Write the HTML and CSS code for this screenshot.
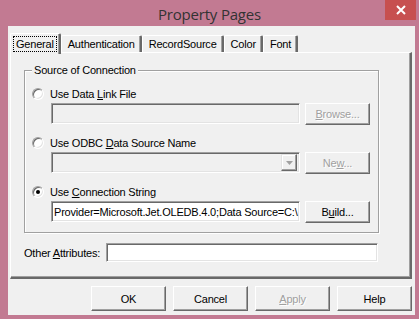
FILE: index.html
```html
<!DOCTYPE html>
<html>
<head>
<meta charset="utf-8">
<link rel="stylesheet" href="styles.css">
</head>
<body>
<div class="window">
  <div class="titlebar">
    <span class="title">Property Pages</span>
    <div class="close"><svg width="10" height="10" viewBox="0 0 10 10"><path d="M1 1L9 9M9 1L1 9" stroke="#fff" stroke-width="2"/></svg></div>
  </div>
  <div class="client">
    <div class="tabs">
      <div class="tab selected"><span class="focus">General</span></div>
      <div class="tab">Authentication</div>
      <div class="tab">RecordSource</div>
      <div class="tab">Color</div>
      <div class="tab">Font</div>
    </div>
    <div class="panel">
      <div class="group">
        <div class="legend">Source of Connection</div>
        <div class="radio-row"><span class="radio"></span><span class="label">Use Data <u>L</u>ink File</span></div>
        <div class="field-row">
          <div class="textbox disabled"></div>
          <div class="btn disabled"><span><u>B</u>rowse...</span></div>
        </div>
        <div class="radio-row"><span class="radio"></span><span class="label">Use ODBC <u>D</u>ata Source Name</span></div>
        <div class="field-row">
          <div class="textbox disabled combo"><div class="drop"><svg width="7" height="4" viewBox="0 0 7 4"><path d="M0 0H7L3.5 4Z" fill="#a0a0a0"/></svg></div></div>
          <div class="btn disabled"><span>Ne<u>w</u>...</span></div>
        </div>
        <div class="radio-row"><span class="radio checked"></span><span class="label">Use <u>C</u>onnection String</span></div>
        <div class="field-row">
          <div class="textbox"><span class="value">Provider=Microsoft.Jet.OLEDB.4.0;Data Source=C:\</span></div>
          <div class="btn"><span>B<u>u</u>ild...</span></div>
        </div>
      </div>
      <div class="other">
        <span class="label">Other <u>A</u>ttributes:</span>
        <div class="textbox wide"></div>
      </div>
    </div>
    <div class="buttons">
      <div class="btn big"><span>OK</span></div>
      <div class="btn big"><span>Cancel</span></div>
      <div class="btn big disabled"><span><u>A</u>pply</span></div>
      <div class="btn big"><span>Help</span></div>
    </div>
  </div>
</div>
</body>
</html>
```
FILE: styles.css
```css
html, body {
  margin: 0;
  padding: 0;
}
body {
  width: 419px;
  height: 319px;
  overflow: hidden;
  background: #c27a92;
  font-family: "Liberation Sans", Arial, sans-serif;
  font-size: 11px;
  letter-spacing: -0.2px;
  color: #000;
}
.window {
  width: 419px;
  height: 319px;
  display: flex;
  flex-direction: column;
  position: relative;
}
.titlebar {
  height: 26px;
  display: flex;
  align-items: center;
  justify-content: center;
  position: relative;
}
.title {
  font-family: "Open Sans", "Noto Sans", sans-serif;
  font-size: 15px;
  letter-spacing: -0.2px;
  color: #333;
  margin-top: 1px;
}
.close {
  position: absolute;
  right: 3px;
  top: 0;
  width: 31px;
  height: 20px;
  background: #c75050;
  display: flex;
  align-items: center;
  justify-content: center;
}
.client {
  margin: 0 4px 4px 8px;
  flex: 1;
  background: #f0f0f0;
  display: flex;
  flex-direction: column;
  padding: 7px 3px 0 2px;
}
.tabs {
  display: flex;
  height: 19px;
  align-items: flex-end;
  position: relative;
  z-index: 2;
}
.tab {
  height: 17px;
  padding: 0 5px 0 6px;
  display: flex;
  align-items: center;
  border-top: 1px solid #fff;
  border-left: 1px solid #fff;
  border-right: 2px solid #696969;
  box-shadow: inset -1px 0 0 #a0a0a0;
  box-sizing: border-box;
  border-radius: 2px 2px 0 0;
  white-space: nowrap;
}
.tab.selected {
  height: 21px;
  margin-bottom: -2px;
  background: #f0f0f0;
  padding: 0 3px;
}
.focus {
  outline: 1px dotted #000;
  padding: 1px 2px;
}
.panel {
  height: 227px;
  box-sizing: border-box;
  border-top: 1px solid #fff;
  border-left: 1px solid #fff;
  border-right: 2px solid #696969;
  border-bottom: 2px solid #696969;
  box-shadow: inset -1px -1px 0 #a0a0a0;
  padding: 17px 31px 0 13px;
  display: flex;
  flex-direction: column;
}
.group {
  position: relative;
  height: 163px;
  box-sizing: border-box;
  border: 1px solid #a0a0a0;
  box-shadow: 1px 1px 0 #fff, inset 1px 1px 0 #fff;
  padding: 16px 7px 0 7px;
}
.legend {
  position: absolute;
  top: -7px;
  left: 7px;
  background: #f0f0f0;
  padding: 0 2px;
  line-height: 13px;
}
.radio-row {
  display: flex;
  align-items: center;
  height: 13px;
}
.radio {
  width: 12px;
  height: 12px;
  box-sizing: border-box;
  border-radius: 50%;
  background: #fff;
  border: 1px solid;
  border-color: #a0a0a0 #fff #fff #a0a0a0;
  box-shadow: inset 1px 1px 0 #696969, inset -1px -1px 0 #e3e3e3;
  margin-right: 6px;
  display: flex;
  align-items: center;
  justify-content: center;
}
.radio.checked::after {
  content: "";
  width: 4px;
  height: 4px;
  border-radius: 50%;
  background: #000;
}
.field-row {
  display: flex;
  margin: 3px 0 11px 19px;
  align-items: flex-start;
}
.textbox {
  width: 249px;
  height: 21px;
  flex: none;
  box-sizing: border-box;
  background: #fff;
  border: 1px solid;
  border-color: #a0a0a0 #fff #fff #a0a0a0;
  box-shadow: inset 1px 1px 0 #696969, inset -1px -1px 0 #e3e3e3;
  display: flex;
  align-items: center;
  overflow: hidden;
  margin-right: 5px;
}
.textbox.disabled {
  background: #f0f0f0;
}
.combo {
  justify-content: flex-end;
  padding: 2px;
}
.drop {
  width: 16px;
  height: 17px;
  box-sizing: border-box;
  border-top: 1px solid #e3e3e3;
  border-left: 1px solid #e3e3e3;
  border-right: 1px solid #696969;
  border-bottom: 1px solid #696969;
  box-shadow: inset -1px -1px 0 #a0a0a0, inset 1px 1px 0 #fff;
  display: flex;
  align-items: center;
  justify-content: center;
  background: #f0f0f0;
}
.value {
  white-space: nowrap;
  padding-left: 2px;
}
.btn {
  width: 65px;
  height: 22px;
  flex: none;
  box-sizing: border-box;
  border-top: 1px solid #fff;
  border-left: 1px solid #fff;
  border-right: 1px solid #696969;
  border-bottom: 1px solid #696969;
  box-shadow: inset -1px -1px 0 #a0a0a0;
  display: flex;
  align-items: center;
  justify-content: center;
  background: #f0f0f0;
}
.btn.disabled span {
  color: #a0a0a0;
  text-shadow: 1px 1px 0 #fff;
}
.other {
  display: flex;
  align-items: center;
  margin-top: 10px;
}
.other .label {
  white-space: nowrap;
  margin-right: 6px;
}
.textbox.wide {
  flex: 1;
  width: auto;
  height: 19px;
  margin-right: 1px;
}
.buttons {
  display: flex;
  justify-content: flex-end;
  gap: 7px;
  margin-top: 7px;
}
.btn.big {
  width: 75px;
  height: 25px;
}
u {
  text-decoration: underline;
  text-underline-offset: 1px;
}
```
